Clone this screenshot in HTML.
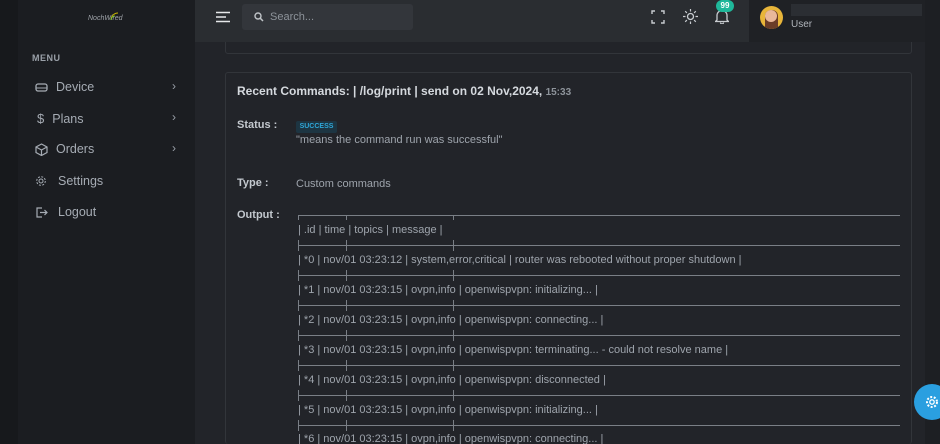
<!DOCTYPE html>
<html><head><style>
*{margin:0;padding:0;box-sizing:border-box}
html,body{width:940px;height:444px;overflow:hidden}
body{background:#222429;font-family:"Liberation Sans",sans-serif;position:relative;color:#adb5bd}
.a{position:absolute}
.side{left:0;top:0;width:195px;height:444px;background:#1b1d21}
.strip{left:0;top:0;width:18px;height:444px;background:#17191c}
.menu{left:32px;top:53px;font-size:9px;font-weight:bold;letter-spacing:.5px;color:#9aa0a8}
.item{left:35px;font-size:12.5px;color:#a6acb4;display:flex;align-items:center}
.item span{margin-left:8px}
.chev{left:172px;font-size:12px;color:#9aa0a8}
.hdr{left:195px;top:0;width:554px;height:42px;background:#2a2d31}
.user{left:749px;top:0;width:176px;height:42px;background:#1f2125}
.rs{left:925px;top:0;width:15px;height:444px;background:#1d1f23}
.card{border:1px solid #32353a;background:#222429;border-radius:3px}
.t{font-size:11px;color:#9ea4ac;white-space:nowrap}
.line{left:298px;width:602px;height:1px;background:#7a7f86}
.tk{width:1px;height:5px;background:#7a7f86}
.lbl{font-size:11px;font-weight:bold;color:#c3c8ce}
</style></head><body>
<div class="a side"></div><div class="a strip"></div>
<div class="a" style="left:88px;top:15px;font-size:7px;font-style:italic;color:#a0a4aa">NochWired</div>
<svg class="a" style="left:110px;top:12px" width="10" height="9"><path d="M1 8a7 7 0 0 1 7-7" stroke="#c8b400" fill="none"/><path d="M1 8a4 4 0 0 1 4-4" stroke="#7bbf3a" fill="none"/></svg>
<div class="a menu">MENU</div>
<div class="a item" style="top:80px"><svg width="13" height="12"><rect x="1" y="3" width="11" height="7" rx="2" stroke="#a6acb4" fill="none" stroke-width="1.3"/><line x1="1" y1="7" x2="12" y2="7" stroke="#a6acb4"/></svg><span>Device</span></div>
<div class="a chev" style="top:79px">›</div>
<div class="a item" style="top:111px"><span style="margin-left:2px;font-size:13px">$</span><span>Plans</span></div>
<div class="a chev" style="top:110px">›</div>
<div class="a item" style="top:142px"><svg width="13" height="13"><path d="M6.5 1L12 4v5.5L6.5 12.5 1 9.5V4z M1 4l5.5 3 5.5-3 M6.5 7v5.5" stroke="#a6acb4" fill="none" stroke-width="1.2"/></svg><span>Orders</span></div>
<div class="a chev" style="top:141px">›</div>
<div class="a item" style="top:174px"><svg width="13" height="12"><circle cx="6" cy="6" r="2" stroke="#a6acb4" fill="none"/><circle cx="6" cy="6" r="4.3" stroke="#a6acb4" fill="none" stroke-dasharray="2 1.4"/></svg><span style="margin-left:10px">Settings</span></div>
<div class="a item" style="top:205px"><svg width="13" height="12"><path d="M7 2H2v9h5 M5 6.5h7 M9.5 4l2.5 2.5L9.5 9" stroke="#a6acb4" fill="none" stroke-width="1.2"/></svg><span style="margin-left:10px">Logout</span></div>

<div class="a card" style="left:225px;top:20px;width:687px;height:34px"></div>
<div class="a hdr"></div>
<svg class="a" style="left:216px;top:11px" width="15" height="12"><path d="M0 1.5h14M0 6h10M0 10.5h14" stroke="#e6e8ea" stroke-width="1.5"/></svg>
<div class="a" style="left:242px;top:4px;width:171px;height:26px;background:#33363b;border-radius:3px"></div>
<svg class="a" style="left:254px;top:12px" width="10" height="10"><circle cx="4" cy="4" r="3" stroke="#c0c4c8" fill="none" stroke-width="1.4"/><path d="M6.2 6.2L9 9" stroke="#c0c4c8" stroke-width="1.5"/></svg>
<div class="a t" style="left:270px;top:11px;color:#8d939a;font-size:11px">Search...</div>
<svg class="a" style="left:651px;top:10px" width="14" height="14"><path d="M1 4V1h3M10 1h3v3M13 10v3h-3M4 13H1v-3" stroke="#c8ccd0" fill="none" stroke-width="1.4"/></svg>
<svg class="a" style="left:683px;top:9px" width="15" height="15"><circle cx="7.5" cy="7.5" r="3" stroke="#c8ccd0" fill="none" stroke-width="1.3"/><path d="M7.5 0v2.5M7.5 12.5V15M0 7.5h2.5M12.5 7.5H15M2.2 2.2l1.7 1.7M11.1 11.1l1.7 1.7M2.2 12.8l1.7-1.7M11.1 3.9l1.7-1.7" stroke="#c8ccd0" stroke-width="1.2"/></svg>
<svg class="a" style="left:715px;top:9px" width="14" height="15"><path d="M2 11V6.5a5 5 0 0 1 10 0V11l1.5 1.5h-13z M5.5 13.5a1.5 1.5 0 0 0 3 0" stroke="#c8ccd0" fill="none" stroke-width="1.3"/></svg>
<div class="a" style="left:716px;top:0;width:18px;height:12px;background:#1fb89a;border-radius:6px;font-size:8px;color:#fff;text-align:center;line-height:12px;font-weight:bold">99</div>
<div class="a user"></div>
<div class="a" style="left:760px;top:6px;width:23px;height:23px;border-radius:50%;background:#e8b53a;overflow:hidden"><div style="margin:4px 0 0 5px;width:13px;height:19px;border-radius:6px 6px 2px 2px;background:#6b3d28"></div></div>
<div class="a" style="left:765px;top:10px;width:12px;height:12px;border-radius:50%;background:#e9b89a"></div>
<div class="a" style="left:791px;top:4px;width:131px;height:12px;background:#2b2e33"></div>
<div class="a t" style="left:791px;top:19px;font-size:10px;color:#b0b5bb">User</div>
<div class="a rs"></div>

<div class="a card" style="left:225px;top:72px;width:687px;height:372px;border-bottom:none"></div>
<div class="a" style="left:237px;top:84px;font-size:12px;font-weight:bold;color:#d5d9de">Recent Commands: | /log/print | send on 02 Nov,2024, <span style="font-size:10px;color:#8d939a">15:33</span></div>
<div class="a lbl" style="left:237px;top:119px">Status :</div>
<div class="a" style="left:296px;top:121px;width:41px;height:12px;background:#1d3542;border-radius:2px;color:#2fa7d8;font-size:7px;font-weight:bold;text-align:center;line-height:12px">SUCCESS</div>
<div class="a t" style="left:296px;top:134px">"means the command run was successful"</div>
<div class="a lbl" style="left:237px;top:177px">Type :</div>
<div class="a t" style="left:296px;top:178px">Custom commands</div>
<div class="a lbl" style="left:237px;top:209px">Output :</div>

<div class="a line" style="top:215px"></div>
<div class="a tk" style="left:298px;top:215px"></div><div class="a tk" style="left:346px;top:215px"></div><div class="a tk" style="left:453px;top:215px"></div>
<div class="a t" style="left:298px;top:224px">| .id | time | topics | message |</div>

<div class="a line" style="top:245px"></div>
<div class="a t" style="left:298px;top:254px">| *0 | nov/01 03:23:12 | system,error,critical | router was rebooted without proper shutdown |</div>
<div class="a line" style="top:275px"></div>
<div class="a t" style="left:298px;top:284px">| *1 | nov/01 03:23:15 | ovpn,info | openwispvpn: initializing... |</div>
<div class="a line" style="top:305px"></div>
<div class="a t" style="left:298px;top:314px">| *2 | nov/01 03:23:15 | ovpn,info | openwispvpn: connecting... |</div>
<div class="a line" style="top:335px"></div>
<div class="a t" style="left:298px;top:344px">| *3 | nov/01 03:23:15 | ovpn,info | openwispvpn: terminating... - could not resolve name |</div>
<div class="a line" style="top:365px"></div>
<div class="a t" style="left:298px;top:374px">| *4 | nov/01 03:23:15 | ovpn,info | openwispvpn: disconnected |</div>
<div class="a line" style="top:395px"></div>
<div class="a t" style="left:298px;top:404px">| *5 | nov/01 03:23:15 | ovpn,info | openwispvpn: initializing... |</div>
<div class="a line" style="top:425px"></div>
<div class="a t" style="left:298px;top:433px">| *6 | nov/01 03:23:15 | ovpn,info | openwispvpn: connecting... |</div>
<div class="a" style="left:298px;top:240px;width:1px;height:204px;background:repeating-linear-gradient(#7a7f86 0 11px,transparent 11px 30px)"></div>
<div class="a" style="left:346px;top:240px;width:1px;height:204px;background:repeating-linear-gradient(#7a7f86 0 11px,transparent 11px 30px)"></div>
<div class="a" style="left:453px;top:240px;width:1px;height:204px;background:repeating-linear-gradient(#7a7f86 0 11px,transparent 11px 30px)"></div>

<div class="a" style="left:914px;top:384px;width:36px;height:36px;border-radius:50%;background:#2a9fe0"></div>
<svg class="a" style="left:925px;top:395px" width="14" height="14"><circle cx="7" cy="7" r="2.2" stroke="#fff" fill="none" stroke-width="1.3"/><circle cx="7" cy="7" r="5" stroke="#fff" fill="none" stroke-width="2" stroke-dasharray="2 1.6"/></svg>
</body></html>
